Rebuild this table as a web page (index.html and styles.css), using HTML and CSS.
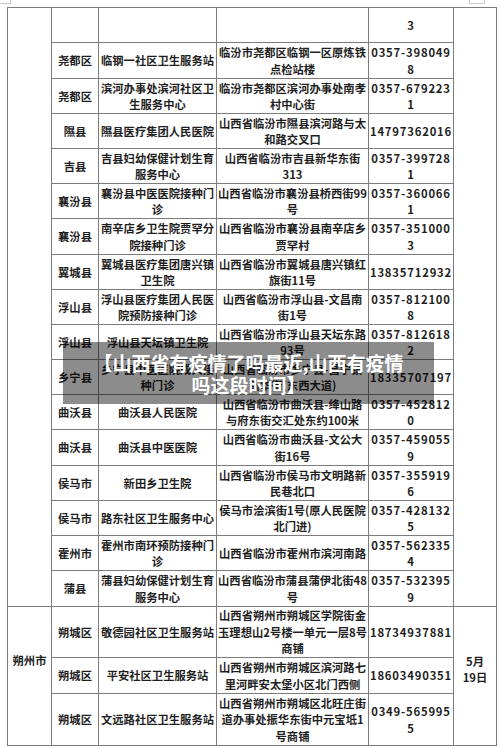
FILE: index.html
```html
<!DOCTYPE html>
<html lang="zh-CN">
<head>
<meta charset="utf-8">
<title>山西省有疫情了吗最近</title>
<link rel="stylesheet" href="styles.css">
</head>
<body>
<div class="page">
  <div class="marks"><span class="mark-l"></span><span class="mark-r"></span></div>
  <div class="sheet">
    <div class="cell city c1">&nbsp;</div>
    <div class="cell date c1"></div>
    <div class="cell"></div><div class="cell"></div><div class="cell"></div><div class="cell ph">3</div>

    <div class="cell">尧都区</div><div class="cell">临钢一社区卫生服务站</div><div class="cell">临汾市尧都区临钢一区原炼铁<br>点检站楼</div><div class="cell ph">0357-398049<br>8</div>
    <div class="cell">尧都区</div><div class="cell">滨河办事处滨河社区卫<br>生服务中心</div><div class="cell">临汾市尧都区滨河办事处南孝<br>村中心街</div><div class="cell ph">0357-679223<br>1</div>
    <div class="cell">隰县</div><div class="cell">隰县医疗集团人民医院</div><div class="cell">山西省临汾市隰县滨河路与太<br>和路交叉口</div><div class="cell ph">14797362016</div>
    <div class="cell">吉县</div><div class="cell">吉县妇幼保健计划生育<br>服务中心</div><div class="cell">山西省临汾市吉县新华东街<br>313</div><div class="cell ph">0357-399728<br>1</div>
    <div class="cell">襄汾县</div><div class="cell">襄汾县中医医院接种门<br>诊</div><div class="cell">山西省临汾市襄汾县桥西街99<br>号</div><div class="cell ph">0357-360066<br>1</div>
    <div class="cell">襄汾县</div><div class="cell">南辛店乡卫生院贾罕分<br>院接种门诊</div><div class="cell">山西省临汾市襄汾县南辛店乡<br>贾罕村</div><div class="cell ph">0357-351000<br>3</div>
    <div class="cell">翼城县</div><div class="cell">翼城县医疗集团唐兴镇<br>卫生院</div><div class="cell">山西省临汾市翼城县唐兴镇红<br>旗街11号</div><div class="cell ph">13835712932</div>
    <div class="cell">浮山县</div><div class="cell">浮山县医疗集团人民医<br>院预防接种门诊</div><div class="cell">山西省临汾市浮山县-文昌南<br>街1号</div><div class="cell ph">0357-812100<br>8</div>
    <div class="cell">浮山县</div><div class="cell">浮山县天坛镇卫生院</div><div class="cell">山西省临汾市浮山县天坛东路<br>93号</div><div class="cell ph">0357-812618<br>2</div>
    <div class="cell">乡宁县</div><div class="cell">乡宁县中医医院成人接<br>种门诊</div><div class="cell">山西省临汾市乡宁县-昌宁镇<br>新华街(东西大道)</div><div class="cell ph">18335707197</div>
    <div class="cell">曲沃县</div><div class="cell">曲沃县人民医院</div><div class="cell">山西省临汾市曲沃县-绛山路<br>与府东街交汇处东约100米</div><div class="cell ph">0357-452812<br>0</div>
    <div class="cell">曲沃县</div><div class="cell">曲沃县中医医院</div><div class="cell">山西省临汾市曲沃县-文公大<br>街16号</div><div class="cell ph">0357-459055<br>9</div>
    <div class="cell">侯马市</div><div class="cell">新田乡卫生院</div><div class="cell">山西省临汾市侯马市文明路新<br>民巷北口</div><div class="cell ph">0357-355919<br>6</div>
    <div class="cell">侯马市</div><div class="cell">路东社区卫生服务中心</div><div class="cell">侯马市浍滨街1号(原人民医院<br>北门进)</div><div class="cell ph">0357-428132<br>5</div>
    <div class="cell">霍州市</div><div class="cell">霍州市南环预防接种门<br>诊</div><div class="cell">山西省临汾市霍州市滨河南路</div><div class="cell ph">0357-562335<br>4</div>
    <div class="cell">蒲县</div><div class="cell">蒲县妇幼保健计划生育<br>服务中心</div><div class="cell">山西省临汾市蒲县蒲伊北街48<br>号</div><div class="cell ph">0357-532395<br>9</div>

    <div class="cell city c2">朔州市</div>
    <div class="cell date c2">5月<br>19日</div>
    <div class="cell">朔城区</div><div class="cell">敬德园社区卫生服务站</div><div class="cell">山西省朔州市朔城区学院街金<br>玉理想山2号楼一单元一层8号<br>商铺</div><div class="cell ph">18734937881</div>
    <div class="cell">朔城区</div><div class="cell">平安社区卫生服务站</div><div class="cell">山西省朔州市朔城区滨河路七<br>里河畔安太堡小区北门西侧</div><div class="cell ph">18603490351</div>
    <div class="cell">朔城区</div><div class="cell">文远路社区卫生服务站</div><div class="cell">山西省朔州市朔城区北旺庄街<br>道办事处振华东街中元宝坻1<br>号商铺</div><div class="cell ph">0349-565995<br>5</div>
  </div>
  <div class="caption">【山西省有疫情了吗最近,山西有疫情<br>吗这段时间】</div>
</div>
</body>
</html>
```
FILE: styles.css
```css
html, body {
  margin: 0;
  padding: 0;
  background: #ffffff;
}

.page {
  position: relative;
  width: 500px;
  height: 748px;
  overflow: hidden;
  font-family: "Noto Sans CJK SC", "Noto Sans", sans-serif;
}

.marks {
  height: 7px;
  display: flex;
  justify-content: space-between;
  align-items: flex-start;
  padding: 0 15px 0 0;
}

.mark-l {
  width: 10px;
  height: 3px;
  border-right: 1px solid #c8c8c8;
  border-bottom: 1px solid #c8c8c8;
}

.mark-r {
  width: 14px;
  height: 3px;
  border-left: 1px solid #d0d0d0;
  border-right: 1px solid #d0d0d0;
  border-bottom: 1px solid #d0d0d0;
}

.sheet {
  margin-left: 7px;
  width: 490px;
  box-sizing: border-box;
  display: grid;
  grid-template-columns: 43px 46px 117px 151px 84px 42px;
  grid-template-rows: 34px 35px 34px 34px 34px 34px 35px 34px 34px 34px 34px 34px 35px 34px 34px 34px 35px 50px 35px 51px;
  gap: 1px;
  padding: 1px;
  background: #7c7c7c;
}

.cell {
  background: #ffffff;
  display: flex;
  align-items: center;
  justify-content: center;
  text-align: center;
  white-space: nowrap;
  font-size: 11.3px;
  font-weight: 700;
  letter-spacing: 0;
  line-height: 16.5px;
  color: #1e1e1e;
}

.ph {
  letter-spacing: 0.8px;
}

.city { grid-column: 1; }
.date { grid-column: 6; }
.c1 { grid-row: 1 / span 17; }
.c2 { grid-row: 18 / span 3; }

.city.c2 { padding-bottom: 32px; }
.date.c2 { padding-bottom: 14px; }

.caption {
  position: absolute;
  left: 63px;
  top: 342px;
  width: 371px;
  height: 62px;
  box-sizing: border-box;
  padding-top: 10px;
  background: rgba(0, 0, 0, 0.45);
  color: #ffffff;
  font-size: 19px;
  font-weight: 700;
  letter-spacing: 0;
  line-height: 22px;
  text-align: center;
}
```
